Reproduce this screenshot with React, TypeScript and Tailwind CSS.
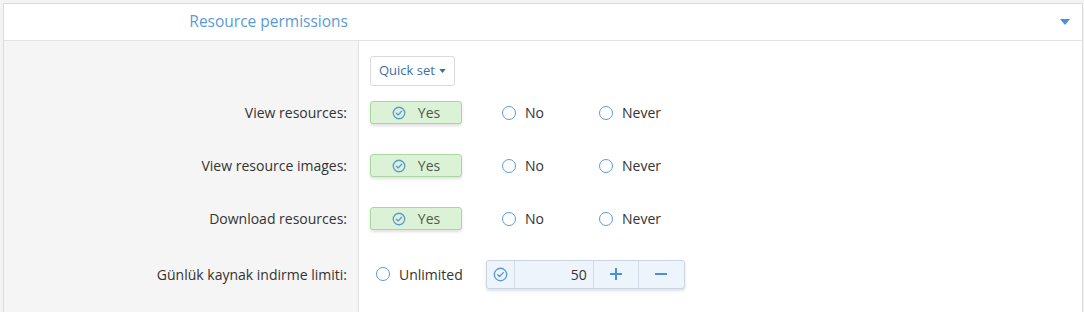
import { useState } from "react";

type Choice = "yes" | "no" | "never";

const ROWS = [
  { key: "view", label: "View resources:" },
  { key: "images", label: "View resource images:" },
  { key: "download", label: "Download resources:" },
];

function CheckCircle({ className }: { className?: string }) {
  return (
    <svg viewBox="0 0 16 16" className={className} fill="none" stroke="currentColor" strokeWidth="1.5">
      <circle cx="8" cy="8" r="6.6" />
      <path d="M5 8.2l2 2 4-4.2" strokeLinecap="round" strokeLinejoin="round" />
    </svg>
  );
}

function Radio({ label, onClick }: { label: string; onClick?: () => void }) {
  return (
    <button type="button" onClick={onClick} className="flex items-center gap-[9px] text-[14px] text-[#333]">
      <span className="w-[14px] h-[14px] rounded-full border-[1.5px] border-[#5b9bd5] bg-white" />
      {label}
    </button>
  );
}

function YesButton() {
  return (
    <button
      type="button"
      className="w-[92px] h-[23px] flex items-center justify-center gap-[12px] rounded-[3px] border border-[#a8d8a0] bg-[#dcf2d6] shadow-[0_2px_3px_rgba(0,0,0,0.12)] text-[14px] text-[#4d5a4d]"
    >
      <CheckCircle className="w-[14px] h-[14px] text-[#5b9bd5]" />
      Yes
    </button>
  );
}

export default function App() {
  const [values, setValues] = useState<Record<string, Choice>>({ view: "yes", images: "yes", download: "yes" });
  const [limit, setLimit] = useState(50);

  return (
    <div className="w-[1084px] h-[312px] bg-[#f3f3f3] pt-[3px] pl-[3px] overflow-hidden" style={{ fontFamily: '"Open Sans", "Noto Sans", sans-serif' }}>
      <div className="w-[1080px] h-[309px] bg-white border-t border-l border-r border-[#dcdcdc]">
        {/* header */}
        <div className="h-[37px] flex items-center border-b border-[#e3e3e3]">
          <div className="w-[355px] pr-[11px] text-right text-[15.5px] text-[#5b9bd5] leading-none">
            Resource permissions
          </div>
          <div className="flex-1 flex justify-end pr-[12px]">
            <svg viewBox="0 0 10 6" className="w-[10px] h-[6px] text-[#4a90d9]" fill="currentColor">
              <path d="M0 0h10L5 6z" />
            </svg>
          </div>
        </div>

        {/* body */}
        <div className="flex h-full">
          <div className="w-[355px] bg-[#f5f5f5] border-r border-[#e0e0e0] pr-[11px] text-[14px] text-[#333]">
            <div className="h-[45px]" />
            {ROWS.map((r) => (
              <div key={r.key} className="h-[53px] flex items-center justify-end">
                {r.label}
              </div>
            ))}
            <div className="h-[58px] flex items-center justify-end">Günlük kaynak indirme limiti:</div>
          </div>

          <div className="flex-1 pl-[11px]">
            <div className="h-[45px] pt-[15px]">
              <button
                type="button"
                className="h-[30px] px-[8px] flex items-center gap-[4px] rounded-[3px] border border-[#dadada] bg-white text-[13px] text-[#3a6fa5]"
              >
                Quick set
                <svg viewBox="0 0 8 5" className="w-[7px] h-[4px]" fill="currentColor">
                  <path d="M0 0h8L4 5z" />
                </svg>
              </button>
            </div>

            {ROWS.map((r) => (
              <div key={r.key} className="h-[53px] flex items-center">
                {values[r.key] === "yes" ? <YesButton /> : null}
                <div className="ml-[40px] w-[97px]">
                  <Radio label="No" onClick={() => setValues((v) => ({ ...v, [r.key]: "no" }))} />
                </div>
                <Radio label="Never" onClick={() => setValues((v) => ({ ...v, [r.key]: "never" }))} />
              </div>
            ))}

            <div className="h-[58px] flex items-center pl-[6px]">
              <Radio label="Unlimited" />
              <div className="ml-[23px] h-[29px] flex rounded-[3px] border border-[#c9d5e2] bg-[#eef4fb] shadow-[0_2px_3px_rgba(0,0,0,0.12)]">
                <div className="w-[28px] flex items-center justify-center border-r border-[#d3dde8]">
                  <CheckCircle className="w-[15px] h-[15px] text-[#5b9bd5]" />
                </div>
                <div className="w-[79px] flex items-center justify-end pr-[6px] border-r border-[#d3dde8] text-[14px] text-[#333]">
                  {limit}
                </div>
                <button type="button" onClick={() => setLimit(limit + 1)} className="w-[45px] flex items-center justify-center border-r border-[#d3dde8] text-[#4a90d9]">
                  <svg viewBox="0 0 12 12" className="w-[12px] h-[12px]" stroke="currentColor" strokeWidth="2">
                    <path d="M6 0v12M0 6h12" />
                  </svg>
                </button>
                <button type="button" onClick={() => setLimit(limit - 1)} className="w-[45px] flex items-center justify-center text-[#4a90d9]">
                  <svg viewBox="0 0 12 12" className="w-[12px] h-[12px]" stroke="currentColor" strokeWidth="2">
                    <path d="M0 6h12" />
                  </svg>
                </button>
              </div>
            </div>
          </div>
        </div>
      </div>
    </div>
  );
}
